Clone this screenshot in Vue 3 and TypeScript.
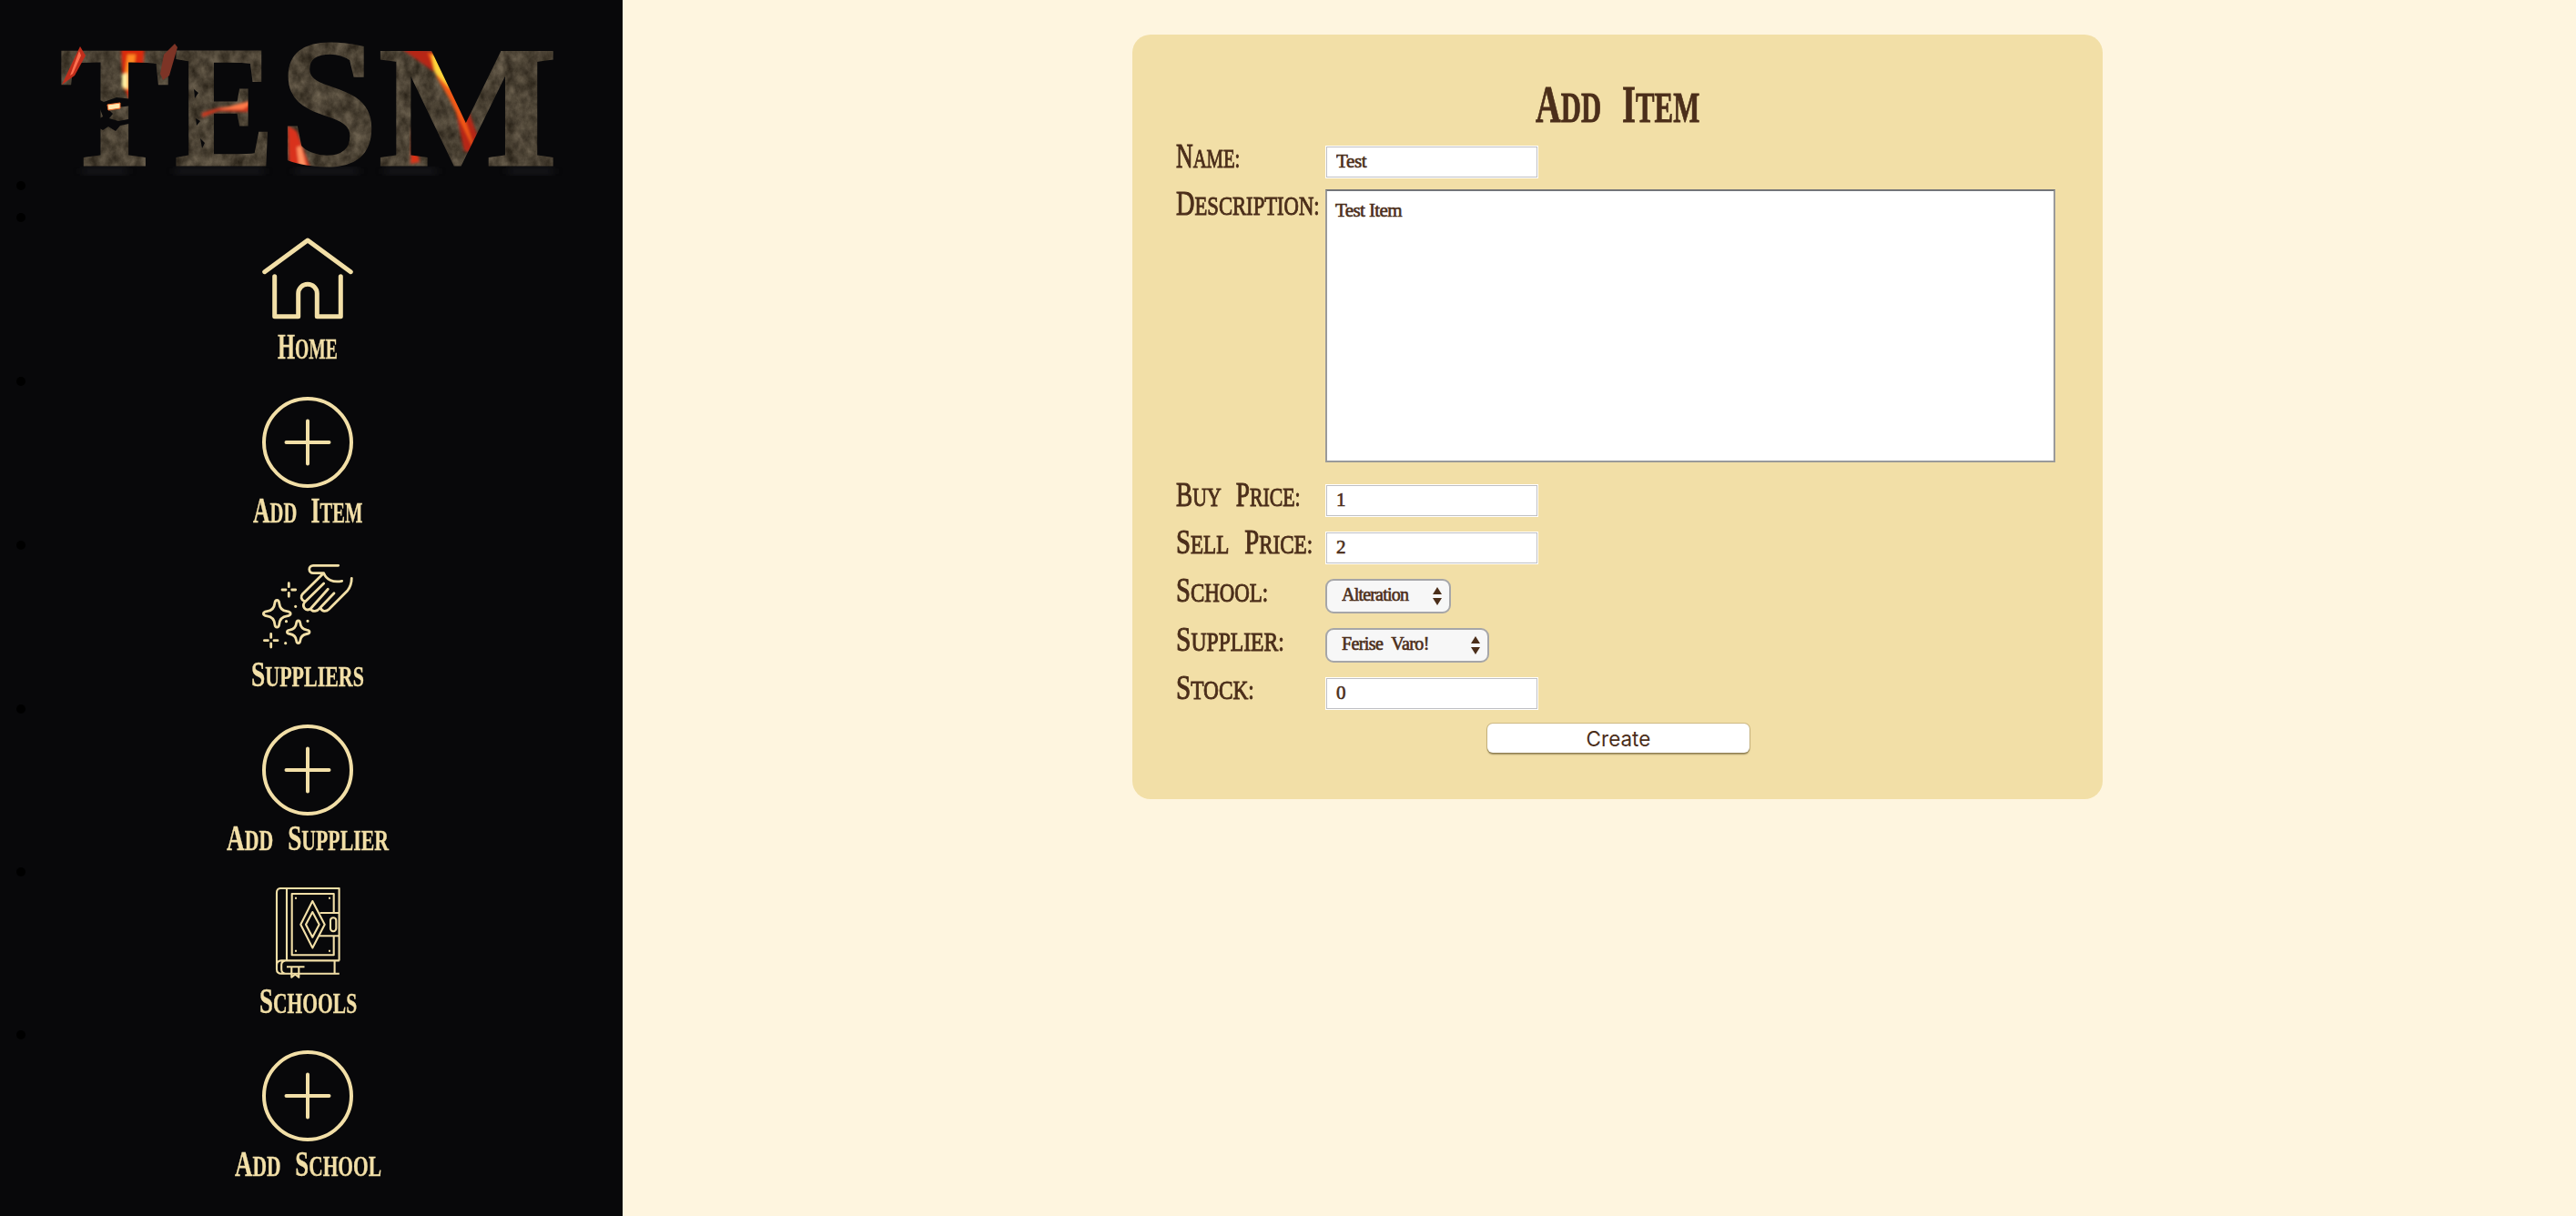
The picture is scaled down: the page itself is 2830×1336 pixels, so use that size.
<script setup lang="ts">
import { ref } from 'vue'

interface NavItem { label: string; icon: 'home' | 'plus' | 'hand' | 'book'; width: number }
interface Field { label: string; width: number; key: string; kind: 'input' | 'area' | 'select' }

const nav: NavItem[] = [
  { label: 'Home', icon: 'home', width: 66 },
  { label: 'Add Item', icon: 'plus', width: 120 },
  { label: 'Suppliers', icon: 'hand', width: 124 },
  { label: 'Add Supplier', icon: 'plus', width: 178 },
  { label: 'Schools', icon: 'book', width: 107 },
  { label: 'Add School', icon: 'plus', width: 161 },
]

const fields: Field[] = [
  { label: 'Name:', width: 70, key: 'name', kind: 'input' },
  { label: 'Description:', width: 158, key: 'description', kind: 'area' },
  { label: 'Buy Price:', width: 137, key: 'buy', kind: 'input' },
  { label: 'Sell Price:', width: 150, key: 'sell', kind: 'input' },
  { label: 'School:', width: 101, key: 'school', kind: 'select' },
  { label: 'Supplier:', width: 119, key: 'supplier', kind: 'select' },
  { label: 'Stock:', width: 86, key: 'stock', kind: 'input' },
]

const form = ref<Record<string, string>>({
  name: 'Test',
  description: 'Test Item',
  buy: '1',
  sell: '2',
  school: 'Alteration',
  supplier: 'Ferise Varo!',
  stock: '0',
})

// Condenses the lettering inside an element to the given width.
const vFit = {
  mounted(el: HTMLElement, binding: { value: number }) {
    const inner = el.firstElementChild as HTMLElement
    el.style.width = `${binding.value}px`
    inner.style.transform = `scaleX(${binding.value / inner.offsetWidth})`
  },
}
</script>

<template>
  <div class="page">
    <aside class="sidebar">
      <svg class="logo" viewBox="0 0 676 203" width="676" height="203" role="img" aria-label="TESM">
        <defs>
          <filter id="stone" x="0" y="0" width="100%" height="100%" color-interpolation-filters="sRGB">
            <feTurbulence type="fractalNoise" baseFrequency="0.09 0.07" numOctaves="5" seed="8" />
            <feColorMatrix type="matrix" values="0.32 0.14 0 0 0.065  0.3 0.13 0 0 0.045  0.26 0.12 0 0 0.015  0 0 0 0 1" />
          </filter>
          <filter id="soft"><feGaussianBlur stdDeviation="1.6" /></filter>
          <filter id="glow"><feGaussianBlur stdDeviation="5" /></filter>
          <pattern id="lava" patternUnits="userSpaceOnUse" x="0" y="0" width="676" height="240">
            <rect width="676" height="240" fill="#4b4235" filter="url(#stone)" />
            <g filter="url(#soft)">
              <path d="M133 50h26l-4 46-12 16-8-20z" fill="#d92c10" />
              <path d="M140 60h9l-5 38h-9z" fill="#ff8a22" />
              <path d="M134 82l6-2v18l-6-3z" fill="#fff0a0" />
              <path d="M222 124l20-6 24-2 23-13-17 20-32-1-18 7z" fill="#c9341b" />
              <path d="M240 120l45-12-18 12z" fill="#ff7a4a" />
              <path d="M316 138l10 6 16 44h-24z" fill="#d9301a" />
              <path d="M326 162l5-2 6 26h-8z" fill="#ff9060" />
              <path d="M436 50l50 8 14 22 32 90-22-4-16-75-34-24z" fill="#b62812" />
              <path d="M470 58l20 5 8 30 26 78-30-62-14-24z" fill="#f55a14" />
              <path d="M474 60l12 3 10 36-18-19z" fill="#ffd63a" />
              <path d="M453 138l8 40-10 2z" fill="#d93218" />
            </g>
            <path d="M104 107l10 5 14-5 18 2v7l-18 2-8 3 4 4-4 5 10 3 16-3v5l-14 3-5 6-8-5-6 4-7-4v-7l7-4-3-8-6-2z" fill="#08080a" />
            <path d="M215 130l5 3-4 5zM220 152l5 5-3 6zM213 98l5 4-4 6z" fill="#08080a" />
          </pattern>
        </defs>
        <g filter="url(#glow)" fill="#25282a" opacity=".55" transform="translate(2 8)">
          <path d="M88 176h50v8H88zM190 176h98v8h-98zM322 176h70v8h-70zM420 176h58v8h-58zM556 176h50v8h-50z" />
        </g>
        <g fill="url(#lava)" stroke="url(#lava)" stroke-width="3" class="rune">
          <text x="66" y="181" textLength="120" lengthAdjust="spacingAndGlyphs">T</text>
          <text x="192" y="181" textLength="109" lengthAdjust="spacingAndGlyphs">E</text>
          <text x="307" y="180" textLength="108" lengthAdjust="spacingAndGlyphs" class="tall">S</text>
          <text x="416" y="181" textLength="196" lengthAdjust="spacingAndGlyphs">M</text>
        </g>
        <path d="M118 115l14-2v6l-13 2z" fill="#ffe7b0" stroke="#f06a2c" stroke-width="1" />
        <path d="M88 51l6 10-12 22-14 10 7-15z" fill="#c02e1c" />
        <path d="M87 56l2 5-9 20-3 2z" fill="#ff7050" />
        <path d="M192 48l3 4-9 31-7 5-3-7 4-21z" fill="#7d3426" />
      </svg>

      <ul class="nav">
        <li class="spacer"></li>
        <li v-for="item in nav" :key="item.label" class="item">
          <svg v-if="item.icon === 'home'" class="icon" viewBox="0 0 100 100" stroke-width="5">
            <path d="M2.7 42.7 50 8l47.3 34.7M13.7 47.8v43.9h26V66.6a10.3 10.3 0 0 1 20.6 0v25.1h26V47.8" />
          </svg>
          <svg v-else-if="item.icon === 'plus'" class="icon" viewBox="0 0 100 100" stroke-width="4">
            <circle cx="50" cy="50" r="48" />
            <path d="M26.5 50h47M50 26.5v47" />
          </svg>
          <svg v-else-if="item.icon === 'hand'" class="icon" viewBox="0 0 100 100" stroke-width="2.8">
            <path d="M83.7 5.3H56a4.2 4.2 0 0 0 0 8.4h11.7c2.8 7 10 10.8 20 8.6" />
            <path d="M66.5 14.7 44.5 36.5c-2.8 3-1.5 6.5 1.8 8" />
            <path d="M67.7 25 46.8 45.5c-3.5 4.5.5 10.8 6.2 7.5l19.3-21.7M53 53c2.5 3.8 7.5 3 10.5-1L79 35.700M64 51.500c1.500 4.700 6 5 9.500 1.700l20.200-20.200c2.800-3.500 4.600-8 4.600-13.700" />
            <path d="M16.300 43.500c1.700 0 2.300 1.500 2.500 3.500.5 5 3.500 8 8.500 8.700 2 .3 3.900.9 3.900 2.600s-1.900 2.300-3.900 2.600c-5 .7-8 3.700-8.500 8.700-.2 2-.8 3.500-2.500 3.500s-2.300-1.500-2.500-3.500c-.5-5-3.500-8-8.500-8.700-2-.3-3.900-.9-3.900-2.600s1.900-2.300 3.900-2.600c5-.7 8-3.700 8.500-8.700.2-2 .8-3.500 2.500-3.500z" />
            <path d="M39.700 66c1.400 0 1.900 1 2.100 2.700.5 4.200 3.100 6.800 7.200 7.400 1.700.2 3 .8 3 2.200s-1.300 2-3 2.200c-4.100.6-6.700 3.200-7.200 7.400-.2 1.700-.7 2.700-2.100 2.700s-1.900-1-2.100-2.700c-.5-4.200-3.100-6.800-7.200-7.400-1.700-.2-3-.8-3-2.200s1.300-2 3-2.200c4.100-.6 6.700-3.200 7.200-7.400.2-1.700.7-2.700 2.100-2.700z" />
            <path d="M29.300 24.700v4M29.300 35.300v4M22 32h4M32.700 32h4M9.700 80.400v4M9.700 91v4M2.400 87.700h4M13 87.700h4" />
            <path d="M36.700 50.300h.01M26.500 66.700h.01M50 66.300h.01M25.700 90.700h.01" stroke-width="3.2" />
          </svg>
          <svg v-else class="icon book" viewBox="0 0 100 100" stroke-width="2.1">
            <path d="M84.600 80.400V1H20.500Q16 1 16 5.500V90q0 4.700 5.300 4.700h63.500M27 1v79.400M84.800 80.400H21Q16 80.400 16 85.500M25.500 80.400q-4.300.8-4.300 4.600v5q0 4.200 4.300 4.700M79.600 80.400v14.300" />
            <path d="M78.700 28V7h-46v67.300h46v-21M63.500 28h21M62.500 53.300h22" />
            <rect x="75" y="33.200" width="6.300" height="15" rx="3.100" />
            <path d="M55.300 15 68.700 40.700 55.300 66.400 42.300 40.700zM55.300 27 62.700 40.700 55.300 54.700 48 40.700z" />
            <path d="M27 87.300h19.500M32.300 87.300v11.500l4-3.300 4 3.300V87.300" />
            <path d="M36 11.700h2M73 11.700h2M36 69.700h2M73 69.700h2" />
          </svg>
          <span v-fit="item.width" class="fit"><span class="caps"><template v-for="(w, i) in item.label.split(' ')" :key="i">{{ i ? ' ' : '' }}<span class="word">{{ w }}</span></template></span></span>
        </li>
      </ul>
    </aside>

    <main class="main">
      <form class="card" @submit.prevent>
        <h1 class="title"><span v-fit="180" class="fit"><span class="caps"><span class="word">Add</span>{{ ' ' }}<span class="word">Item</span></span></span></h1>
        <div v-for="f in fields" :key="f.key" class="row" :class="[f.kind, f.key]">
          <label class="label" :for="f.key"><span v-fit="f.width" class="fit"><span class="caps"><template v-for="(w, i) in f.label.split(' ')" :key="i">{{ i ? ' ' : '' }}<span class="word">{{ w }}</span></template></span></span></label>
          <textarea v-if="f.kind === 'area'" :id="f.key" v-model="form[f.key]" class="control"></textarea>
          <div v-else-if="f.kind === 'select'" class="picker">
            <select :id="f.key" v-model="form[f.key]" class="control"><option>{{ form[f.key] }}</option></select>
            <svg class="arrows" viewBox="0 0 10 20" width="10" height="20"><path d="M5 0l5 8H0zM5 20l5-8H0z" /></svg>
          </div>
          <input v-else :id="f.key" v-model="form[f.key]" type="text" class="control" />
        </div>
        <button class="create" type="submit">Create</button>
      </form>
    </main>
  </div>
</template>

<style>
body {
  margin: 0;
}
</style>

<style scoped>
.page {
  display: flex;
  width: 2830px;
  height: 1336px;
  overflow: hidden;
  background: #fef5df;
  color: #4b2e1a;
  font-family: 'Liberation Serif', serif;
}
.sidebar {
  box-sizing: border-box;
  width: 684px;
  padding-right: 8px;
  background: #08080a;
  color: #f2dfa7;
}
.logo {
  display: block;
  overflow: visible;
}
.rune {
  font: bold 188px 'Liberation Serif', serif;
}
.tall {
  font-size: 200px;
}
.nav {
  margin: 0;
  padding: 0;
  list-style: none;
}
.nav li {
  position: relative;
}
.nav li::before {
  content: '';
  position: absolute;
  left: 18px;
  top: -4px;
  width: 10px;
  height: 10px;
  border-radius: 50%;
  background: #000;
}
.spacer {
  height: 35px;
}
.item {
  box-sizing: border-box;
  height: 180px;
  padding-top: 18px;
  display: flex;
  flex-direction: column;
  align-items: center;
  font-size: 39px;
  font-weight: bold;
}
.item:nth-child(n + 5) {
  height: 179px;
}
.item .word {
  -webkit-text-stroke: 0.4px currentColor;
}
.icon {
  width: 100px;
  height: 100px;
  flex: none;
  fill: none;
  stroke: #f2dfa7;
  stroke-linecap: round;
  stroke-linejoin: round;
}
.book {
  stroke-linecap: butt;
}
.fit {
  display: block;
  height: 50px;
  line-height: 50px;
  white-space: nowrap;
}
.caps {
  display: inline-block;
  transform-origin: 0 50%;
  word-spacing: 0.34em;
}
.word {
  display: inline-block;
  font-size: 0.8em;
  line-height: 1;
  text-transform: uppercase;
  word-spacing: 0;
}
.word::first-letter {
  font-size: 1.25em;
}
.main {
  flex: 1;
  padding: 38px 0 0 560px;
}
.card {
  box-sizing: border-box;
  width: 1066px;
  height: 840px;
  padding: 45px 52px 0 48px;
  border-radius: 20px;
  background: #f2dfa7;
}
.title {
  display: flex;
  justify-content: center;
  height: 77px;
  margin: 0 -4px 0 0;
  font-size: 58px;
}
.title .fit {
  height: 64px;
  line-height: 64px;
}
.title .word {
  -webkit-text-stroke: 0.8px currentColor;
}
.row {
  display: flex;
  align-items: flex-start;
  height: 52px;
}
.row.description {
  height: 324px;
  margin-top: -4px;
}
.row.select {
  height: 54px;
}
.label {
  width: 164px;
  margin-top: -14px;
  flex: none;
  font-size: 38px;
}
.description .label {
  margin-top: -10px;
}
.select .label {
  margin-top: -13px;
}
.label .word {
  -webkit-text-stroke: 1px currentColor;
}
.control {
  box-sizing: border-box;
  margin: 0;
  border-radius: 0;
  background: #fff;
  color: #4b2e1a;
  font: 21px 'Liberation Serif', serif;
  letter-spacing: -0.9px;
  -webkit-text-stroke: 0.6px currentColor;
  outline: none;
}
input.control {
  width: 234px;
  height: 36px;
  padding: 0 11px 2px;
  border: 1px solid #fff;
  box-shadow: inset 0 0 0 1px #bfc0c4;
}
.name input.control {
  letter-spacing: -0.4px;
}
textarea.control {
  width: 802px;
  height: 300px;
  padding: 9px;
  border: 2px solid #9a9a9a;
  border-top-color: #737578;
  resize: none;
  letter-spacing: -0.6px;
}
.picker {
  display: grid;
  align-items: center;
}
.picker > * {
  grid-area: 1 / 1;
}
.picker .control {
  width: 138px;
  height: 38px;
  padding: 0 0 4px 16px;
  border: 2px solid #a6a6a8;
  border-radius: 9px;
  background: #f7f7f7;
  appearance: none;
  font-size: 20px;
  letter-spacing: -0.8px;
}
.supplier .picker .control {
  width: 180px;
  word-spacing: 5px;
  letter-spacing: -0.6px;
}
.arrows {
  justify-self: end;
  margin-right: 10px;
  fill: #4b2e1a;
  pointer-events: none;
}
.create {
  display: block;
  width: 288px;
  height: 32px;
  margin: -1px auto 0 342px;
  padding: 0;
  border: 0;
  border-radius: 6px;
  background: #fff;
  box-shadow: 0 0 0 1px rgba(90, 70, 20, 0.22), 0 1.5px 1.5px rgba(60, 50, 20, 0.45);
  color: #4b2e1a;
  font: 22.5px Inter, sans-serif;
}
</style>
